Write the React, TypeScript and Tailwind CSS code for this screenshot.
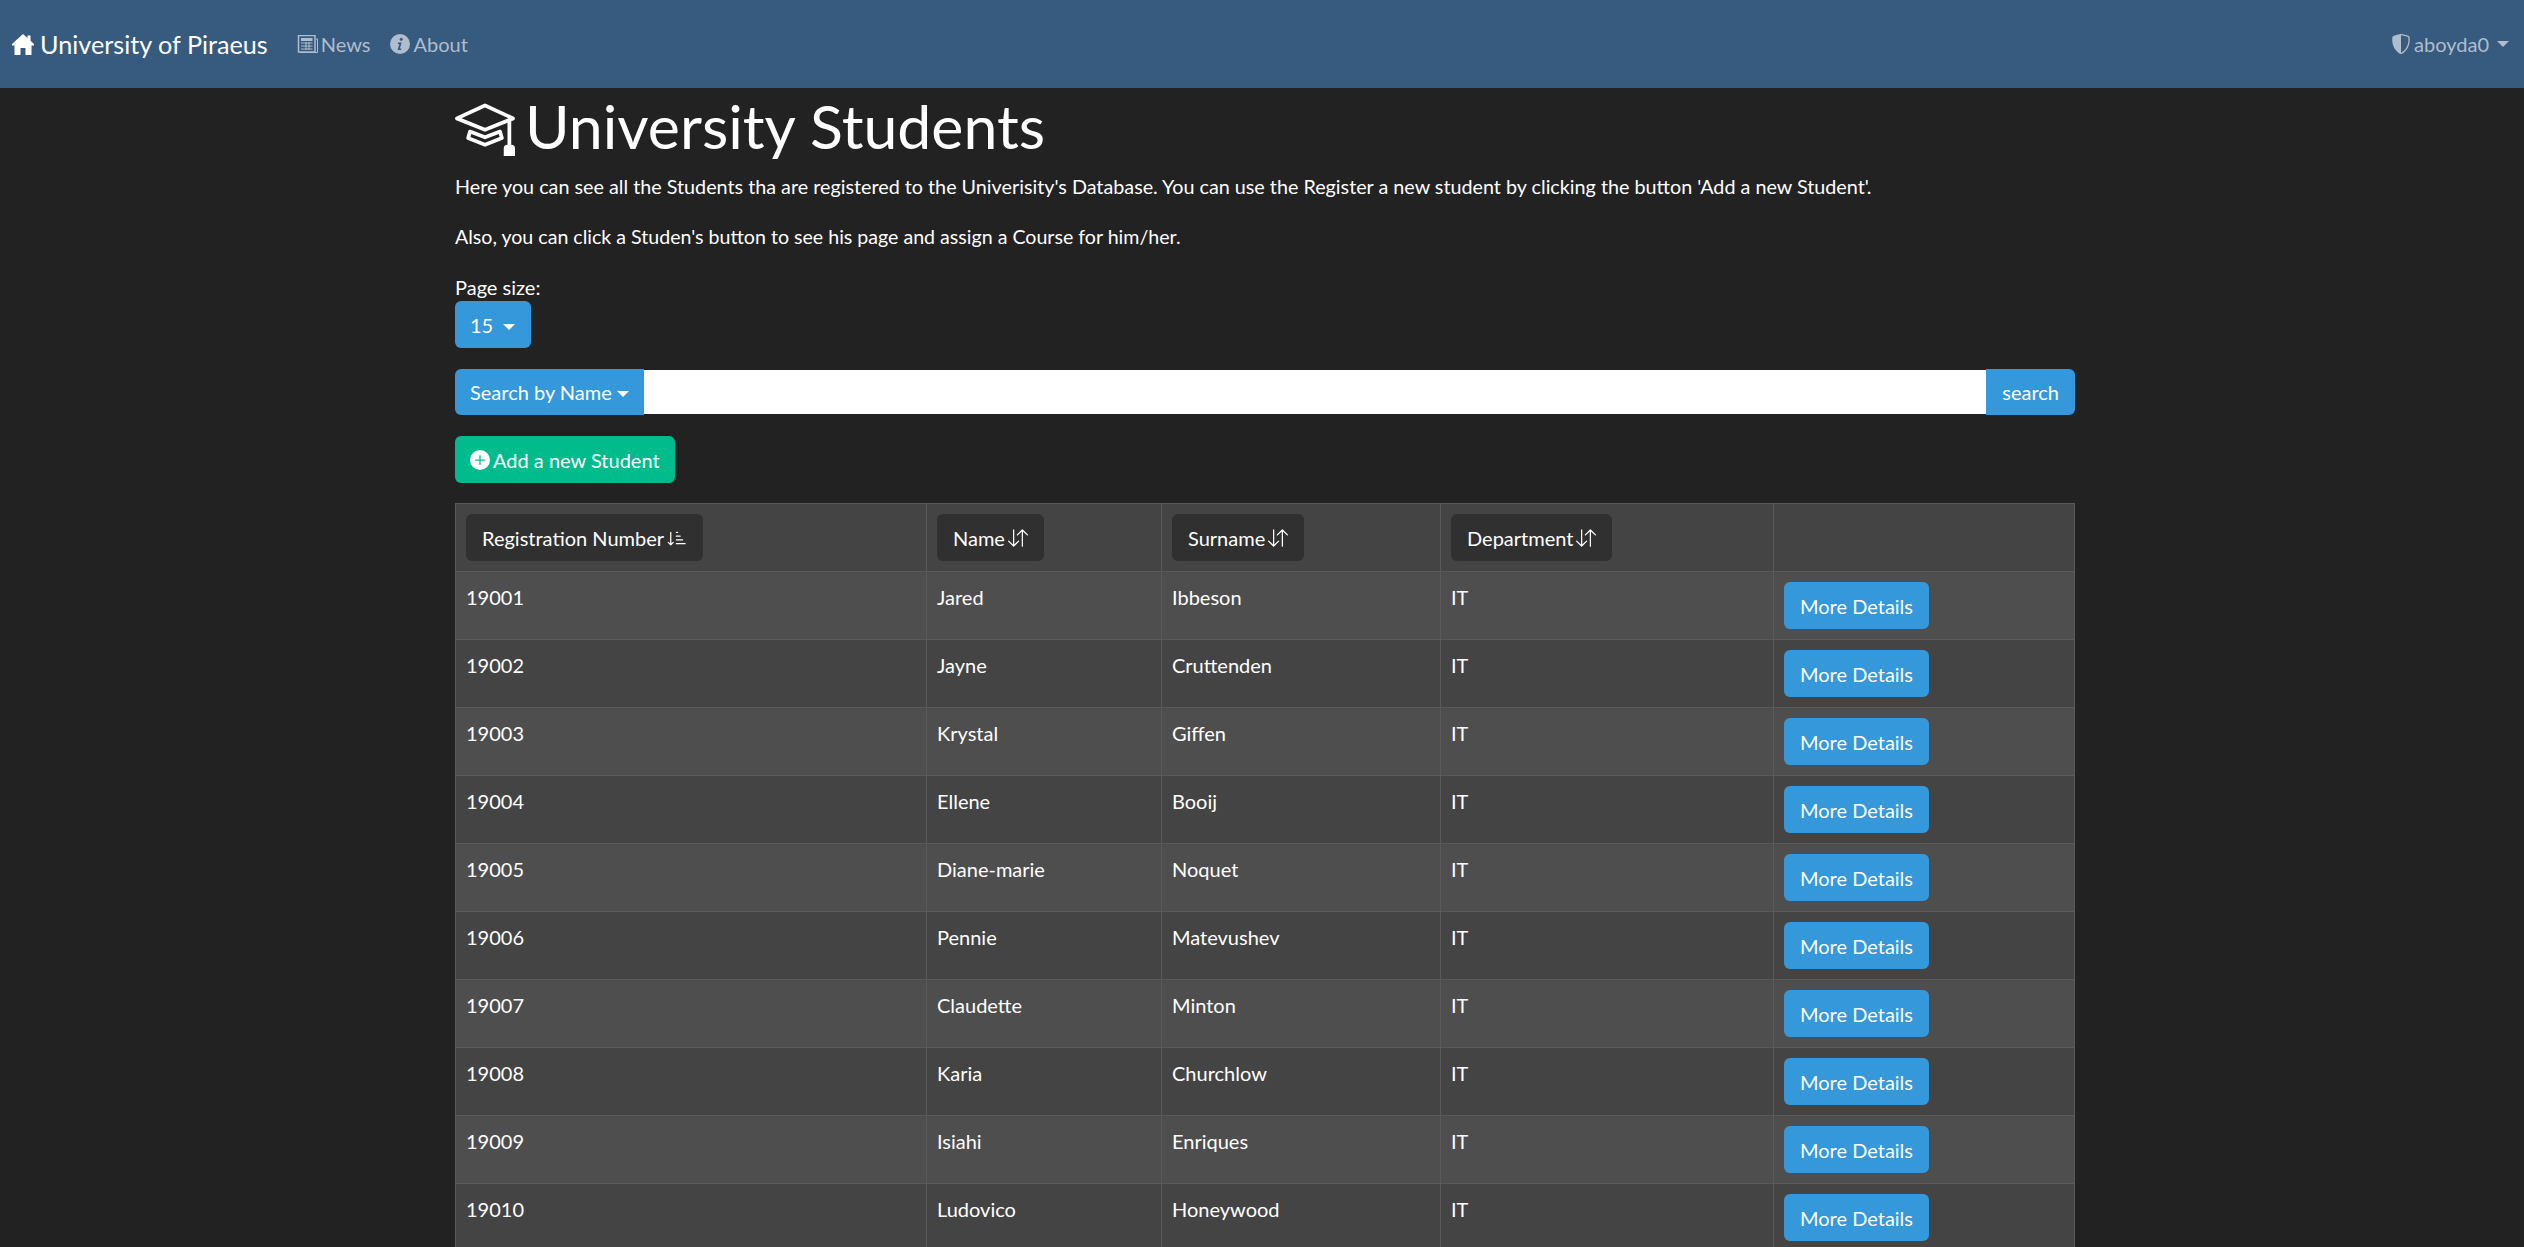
import { BsArrowDownUp, BsMortarboard, BsPlusCircleFill, BsShieldShaded, BsSortDownAlt } from "react-icons/bs";

const students = [
  ["19001", "Jared", "Ibbeson"],
  ["19002", "Jayne", "Cruttenden"],
  ["19003", "Krystal", "Giffen"],
  ["19004", "Ellene", "Booij"],
  ["19005", "Diane-marie", "Noquet"],
  ["19006", "Pennie", "Matevushev"],
  ["19007", "Claudette", "Minton"],
  ["19008", "Karia", "Churchlow"],
  ["19009", "Isiahi", "Enriques"],
  ["19010", "Ludovico", "Honeywood"],
];

function Caret() {
  return <span className="ml-[5px] inline-block h-0 w-0 border-x-[6px] border-t-[6px] border-x-transparent border-t-current align-[3px]" />;
}

function HomeIcon() {
  return (
    <svg width="22" height="21" viewBox="0 0 22 21" fill="currentColor">
      <path d="M11 0 L15.5 4 V1.5 H18.5 V6.7 L22 10 V11.5 H19.5 V21 H13.5 V14 H8.5 V21 H2.5 V11.5 H0 V10 Z" />
    </svg>
  );
}

function NewsIcon() {
  return (
    <svg width="21" height="18" viewBox="0 0 21 18" fill="none" stroke="currentColor">
      <rect x="1.5" y="0.5" width="16.5" height="16.5" strokeWidth="1.5" />
      <path d="M19 4 H20.5 V17.5 H3" strokeWidth="1" />
      <rect x="4" y="3" width="11.5" height="3" fill="currentColor" strokeWidth="0" />
      <path d="M4 8 H15.5 M4 11 H15.5 M4 14 H15.5 M9 7 V15 M12 7 V15" strokeWidth="1" />
    </svg>
  );
}

function InfoIcon() {
  return (
    <svg width="20" height="20" viewBox="0 0 20 20">
      <circle cx="10" cy="10" r="10" fill="currentColor" />
      <circle cx="11.2" cy="5.2" r="1.5" fill="#375a7f" />
      <path d="M8 8.6 H11.6 L9.9 14.6 H11.4 L11 16 H7.6 L9.3 10 H7.7 Z" fill="#375a7f" />
    </svg>
  );
}

function SortButton({ label, sorted = false }: { label: string; sorted?: boolean }) {
  return (
    <button className="flex h-[47px] items-center gap-[3px] rounded-[6px] bg-[#303030] px-4 text-white">
      {label}
      {sorted ? <BsSortDownAlt size={20} /> : <BsArrowDownUp size={20} />}
    </button>
  );
}

export default function App() {
  return (
    <div className="h-screen overflow-hidden bg-[#222222] font-['Lato',sans-serif] text-[20px] leading-[28px] text-white">
      <nav className="flex h-[88px] items-center justify-between bg-[#375a7f] pl-3 pr-[15px]">
        <div className="flex items-center">
          <a className="flex items-center gap-[6px] text-[25.2px] text-white">
            <HomeIcon />
            University of Piraeus
          </a>
          <a className="ml-[29px] flex items-center gap-[3px] text-[#afbdcc]">
            <NewsIcon />
            News
          </a>
          <a className="ml-[20px] flex items-center gap-[3px] text-[#afbdcc]">
            <InfoIcon />
            About
          </a>
        </div>
        <a className="flex items-center gap-[3px] text-[#afbdcc]">
          <BsShieldShaded size={20} />
          aboyda0
          <Caret />
        </a>
      </nav>

      <main className="ml-[455px] w-[1620px]">
        <h1 className="-mt-[2px] flex h-[80px] items-center gap-[10px] text-[60.8px] leading-[72px]">
          <BsMortarboard size={60} />
          University Students
        </h1>
        <p className="mt-[7px] text-[19.75px]">Here you can see all the Students tha are registered to the Univerisity's Database. You can use the Register a new student by clicking the button 'Add a new Student'.</p>
        <p className="mt-[22px] text-[19.6px]">Also, you can click a Studen's button to see his page and assign a Course for him/her.</p>
        <div className="mt-[22px]">Page size:</div>
        <button className="flex h-[47px] w-[76px] items-center rounded-[6px] bg-[#3498db] px-[15px] text-white">
          15 <span className="ml-[5px]"><Caret /></span>
        </button>

        <div className="mt-[21px] flex h-[46px] items-center">
          <button className="h-full rounded-l-[6px] bg-[#3498db] px-[15px] text-white">
            Search by Name
            <Caret />
          </button>
          <input className="h-[44px] min-w-0 flex-1 bg-white" />
          <button className="h-full rounded-r-[6px] bg-[#3498db] px-4 text-white">search</button>
        </div>

        <button className="mt-[21px] flex h-[47px] items-center gap-[3px] rounded-[6px] bg-[#00bc8c] px-[15px] text-white">
          <BsPlusCircleFill size={20} />
          Add a new Student
        </button>

        <table className="mt-[20px] w-full table-fixed border-collapse">
          <thead>
            <tr className="h-[68px] bg-[#444444]">
              <th className="w-[471px] border border-[#5a5a5a] px-[10px] text-left font-normal"><SortButton label="Registration Number" sorted /></th>
              <th className="w-[235px] border border-[#5a5a5a] px-[10px] text-left font-normal"><SortButton label="Name" /></th>
              <th className="w-[279px] border border-[#5a5a5a] px-[10px] text-left font-normal"><SortButton label="Surname" /></th>
              <th className="w-[333px] border border-[#5a5a5a] px-[10px] text-left font-normal"><SortButton label="Department" /></th>
              <th className="border border-[#5a5a5a]" />
            </tr>
          </thead>
          <tbody>
            {students.map(([id, name, surname], i) => (
              <tr key={id} className={`h-[68px] ${i % 2 === 0 ? "bg-[#4e4e4e]" : "bg-[#444444]"}`}>
                <td className="border border-[#5a5a5a] px-[10px] pt-[11px] align-top">{id}</td>
                <td className="border border-[#5a5a5a] px-[10px] pt-[11px] align-top">{name}</td>
                <td className="border border-[#5a5a5a] px-[10px] pt-[11px] align-top">{surname}</td>
                <td className="border border-[#5a5a5a] px-[10px] pt-[11px] align-top">IT</td>
                <td className="border border-[#5a5a5a] px-[10px] align-middle">
                  <button className="h-[47px] rounded-[6px] bg-[#3498db] px-4 text-white">More Details</button>
                </td>
              </tr>
            ))}
          </tbody>
        </table>
      </main>
    </div>
  );
}
